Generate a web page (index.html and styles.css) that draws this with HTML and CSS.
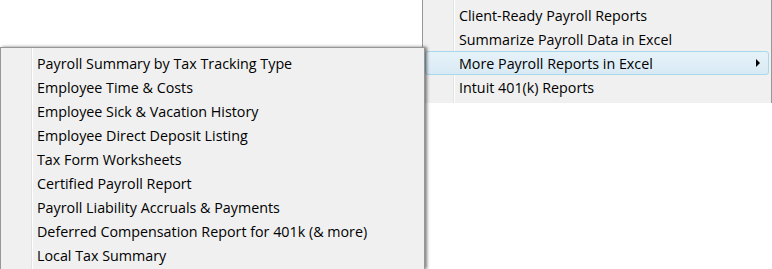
FILE: index.html
```html
<!DOCTYPE html>
<html lang="en">
<head>
    <meta charset="UTF-8">
    <title>Payroll Reports Menu</title>
    <link rel="stylesheet" href="styles.css">
</head>
<body>
    <div class="menu menu-main">
        <ul>
            <li>Client-Ready Payroll Reports</li>
            <li>Summarize Payroll Data in Excel</li>
            <li class="active"><span>More Payroll Reports in Excel</span><span class="arrow"></span></li>
            <li>Intuit 401(k) Reports</li>
        </ul>
    </div>

    <div class="menu menu-sub">
        <ul>
            <li>Payroll Summary by Tax Tracking Type</li>
            <li>Employee Time &amp; Costs</li>
            <li>Employee Sick &amp; Vacation History</li>
            <li>Employee Direct Deposit Listing</li>
            <li>Tax Form Worksheets</li>
            <li>Certified Payroll Report</li>
            <li>Payroll Liability Accruals &amp; Payments</li>
            <li>Deferred Compensation Report for 401k (&amp; more)</li>
            <li>Local Tax Summary</li>
        </ul>
    </div>
</body>
</html>
```

FILE: styles.css
```css
body {
    margin: 0;
    width: 772px;
    height: 269px;
    overflow: hidden;
    position: relative;
    background: #fff;
    font-family: "Open Sans", "Noto Sans", sans-serif;
    font-size: 14.3px;
    color: #000;
}
.menu {
    position: absolute;
    box-sizing: border-box;
    border: 1px solid #979797;
    background:
        linear-gradient(to right, transparent 30px, #e2e3e3 30px, #e2e3e3 31px, #fff 31px, #fff 32px, transparent 32px),
        #f0f0f0;
}
.menu ul {
    list-style: none;
    margin: 0;
    padding: 3px 0 0;
}
.menu li {
    display: flex;
    justify-content: space-between;
    align-items: center;
    height: 24px;
    box-sizing: border-box;
    margin: 0 2px;
    padding: 0 8px 0 33px;
    border: 1px solid transparent;
    border-radius: 3px;
    white-space: nowrap;
}
.menu-main {
    left: 422px;
    top: -1px;
    width: 350px;
    height: 104px;
    border-bottom: none;
}
.menu-sub {
    left: 0;
    top: 47px;
    width: 425px;
    height: 222px;
    border-bottom: none;
    box-shadow: 2px 0 3px rgba(0, 0, 0, 0.5);
    z-index: 2;
}
.menu .active {
    border-color: #a8d8eb;
    background: linear-gradient(to bottom, #e6f2f9, #d9eaf4);
}
.arrow {
    width: 0;
    height: 0;
    border-left: 4px solid #000;
    border-top: 4px solid transparent;
    border-bottom: 4px solid transparent;
}
```
